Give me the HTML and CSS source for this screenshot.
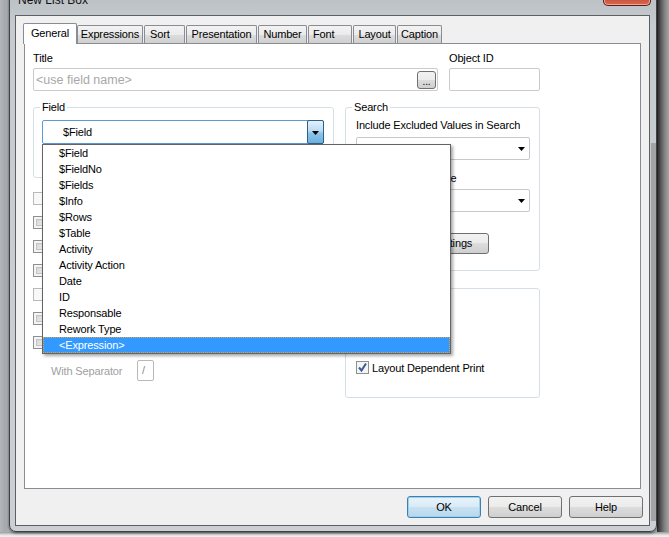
FILE: index.html
```html
<!DOCTYPE html>
<html>
<head>
<meta charset="utf-8">
<link rel="stylesheet" href="styles.css">
</head>
<body>
<div class="desktop">
  <div class="shade-right"></div>
  <div class="shade-bottom"></div>
  <div class="window">
    <div class="frame-bar"></div>
    <div class="titlebar">
      <span class="title">New List Box</span>
      <span class="close"></span>
    </div>
    <div class="client">
      <div class="tabs">
        <div class="tab active t-general">General</div>
        <div class="tab t-expr">Expressions</div>
        <div class="tab t-sort">Sort</div>
        <div class="tab t-pres">Presentation</div>
        <div class="tab t-num">Number</div>
        <div class="tab t-font">Font</div>
        <div class="tab t-layout">Layout</div>
        <div class="tab t-caption">Caption</div>
      </div>
      <div class="panel">
        <div class="row-top">
          <div class="col-title">
            <div class="label">Title</div>
            <div class="input title-input">
              <span class="placeholder">&lt;use field name&gt;</span>
              <span class="dots">...</span>
            </div>
          </div>
          <div class="col-id">
            <div class="label">Object ID</div>
            <div class="input id-input"></div>
          </div>
        </div>
        <div class="row-main">
          <div class="col-left">
            <fieldset class="group field-group">
              <legend class="lg-field">Field</legend>
              <div class="combo focus">
                <span class="combo-text">$Field</span>
                <span class="dropbtn"><svg width="7" height="4" viewBox="0 0 7 4"><polygon points="0,0 7,0 3.5,4" fill="#000"/></svg></span>
              </div>
            </fieldset>
            <div class="checks">
              <div class="check"><span class="box light"></span></div>
              <div class="check"><span class="box"></span></div>
              <div class="check"><span class="box"></span></div>
              <div class="check"><span class="box"></span></div>
              <div class="check"><span class="box light"></span></div>
              <div class="check"><span class="box"></span></div>
              <div class="check"><span class="box"></span></div>
            </div>
            <div class="sep-row">
              <span class="sep-label">With Separator</span>
              <span class="sep-input">/</span>
            </div>
          </div>
          <div class="col-right">
            <fieldset class="group search-group">
              <legend class="lg-search">Search</legend>
              <div class="label s-label1">Include Excluded Values in Search</div>
              <div class="combo plain">
                <span class="combo-text">&lt;use default&gt;</span>
                <span class="arrow"><svg width="7" height="4" viewBox="0 0 7 4"><polygon points="0,0 7,0 3.5,4" fill="#000"/></svg></span>
              </div>
              <div class="label s-label2">Default Search Mode</div>
              <div class="combo plain">
                <span class="combo-text"></span>
                <span class="arrow"><svg width="7" height="4" viewBox="0 0 7 4"><polygon points="0,0 7,0 3.5,4" fill="#000"/></svg></span>
              </div>
              <div class="btn small-btn">Search Settings</div>
            </fieldset>
            <fieldset class="group print-group">
              <div class="check checked-row"><span class="box checked"><svg width="11" height="11" viewBox="0 0 11 11"><path d="M2 5.5 L4.5 8.5 L9 1.5" fill="none" stroke="#3c5a9a" stroke-width="2"/></svg></span><span>Layout Dependent Print</span></div>
            </fieldset>
          </div>
        </div>
        <div class="dropdown">
          <div class="item">$Field</div>
          <div class="item">$FieldNo</div>
          <div class="item">$Fields</div>
          <div class="item">$Info</div>
          <div class="item">$Rows</div>
          <div class="item">$Table</div>
          <div class="item">Activity</div>
          <div class="item">Activity Action</div>
          <div class="item">Date</div>
          <div class="item">ID</div>
          <div class="item">Responsable</div>
          <div class="item">Rework Type</div>
          <div class="item selected">&lt;Expression&gt;</div>
        </div>
      </div>
      <div class="buttons">
        <div class="btn default">OK</div>
        <div class="btn">Cancel</div>
        <div class="btn">Help</div>
      </div>
    </div>
  </div>
</div>
</body>
</html>
```

FILE: styles.css
```css
* { box-sizing: border-box; }
html, body { margin: 0; padding: 0; }
body {
  width: 669px; height: 537px; overflow: hidden;
  font-family: "Liberation Sans", Arial, sans-serif;
  font-size: 11px; color: #000;
  letter-spacing: -0.15px;
  background: #acb0b4;
}
.desktop {
  position: relative; width: 669px; height: 537px; overflow: hidden;
  background: linear-gradient(to right, #b3b7bb, #a5a9ad 5px, #b0b4b8 9px);
}
.shade-right {
  position: absolute; left: 657px; top: 0; width: 12px; bottom: 0;
  background: linear-gradient(to right, #2a2a2a, #4c4c4c 25%, #7e7e7e 60%, #a4a4a4);
}
.shade-bottom {
  position: absolute; left: 0; right: 0; top: 532px; bottom: 0;
  background: linear-gradient(#9a9a9a, #e4e4e4 3px, #f2f2f2);
}
.window {
  position: absolute; left: 9px; top: -16px; width: 648px; height: 548px;
  border: 1px solid #3f4245; border-radius: 7px;
  background: linear-gradient(#b7bcc1, #c6cbcf 40px, #ccd0d4);
  padding: 0 6px 5px 5px;
  display: flex; flex-direction: column;
  box-shadow: 0 1px 3px rgba(0,0,0,0.6);
}
.frame-bar {
  position: absolute; left: 641px; top: 158px; width: 5px; bottom: 10px;
  background: #a3a3a3;
}
.titlebar {
  height: 30px; flex: 0 0 30px;
  display: flex; align-items: flex-start;
}
.title {
  margin-top: 8px; margin-left: 3px;
  font-size: 12px; line-height: 15px; color: #111; letter-spacing: 0;
}
.close {
  margin-left: auto; margin-top: 1px; margin-right: -1px;
  width: 48px; height: 20px;
  border: 1px solid #5a1c17; border-top: none;
  border-radius: 0 0 5px 5px;
  background: linear-gradient(#d87a6a, #c4503c 60%, #d9664c);
  box-shadow: inset 0 0 0 1px #e9a89a;
}
.client {
  flex: 1 1 auto;
  border: 1px solid #5c6064;
  background: #f0f0f0;
  padding: 7px 6px 7px 8px;
  display: flex; flex-direction: column;
}
.tabs {
  display: flex; align-items: flex-end;
  height: 20px; flex: 0 0 20px;
  position: relative; z-index: 2;
}
.tab {
  height: 18px; line-height: 17px;
  border: 1px solid #898c95; border-bottom: none;
  border-radius: 2px 2px 0 0;
  background: linear-gradient(#f3f3f3, #ebebeb 50%, #dddddd 50%, #cfcfcf);
  text-align: center;
  margin-right: 1px;
  white-space: nowrap;
}
.tab.active {
  height: 21px; margin-bottom: -1px; margin-left: -1px; margin-right: 0;
  background: #fff; line-height: 19px;
}
.t-general { width: 54px; }
.t-expr { width: 66px; }
.t-sort { width: 41px; text-align: left; padding-left: 5px; }
.t-pres { width: 71px; }
.t-num { width: 49px; }
.t-font { width: 44px; text-align: left; padding-left: 4px; }
.t-layout { width: 43px; }
.t-caption { width: 45px; }
.panel {
  position: relative;
  height: 446px; flex: 0 0 446px;
  margin-right: 2px;
  border: 1px solid #898c95;
  background: #fff;
  padding: 8px 0 0 8px;
}
.label { height: 13px; line-height: 13px; margin-bottom: 3px; white-space: nowrap; }
.row-top { display: flex; gap: 11px; }
.col-title { width: 405px; }
.col-id { width: 91px; }
.input {
  height: 23px; border: 1px solid #c9cbcf; border-radius: 2px;
  background: #fff;
}
.title-input {
  display: flex; align-items: center; justify-content: space-between;
  padding-left: 2px; padding-right: 1px;
}
.placeholder { color: #a8a8a8; font-size: 12.5px; letter-spacing: 0; }
.dots {
  width: 19px; height: 18px;
  border: 1px solid #707070; border-radius: 3px;
  background: linear-gradient(#f2f2f2, #ebebeb 50%, #dddddd 50%, #cfcfcf);
  text-align: center; line-height: 20px; font-size: 10px;
}
.row-main { display: flex; gap: 11px; margin-top: 10px; }
.col-left { width: 301px; }
.col-right { width: 195px; }
.group {
  margin: 0; min-width: 0;
  border: 1px solid #d5dfe5; border-radius: 3px;
}
legend {
  padding: 0 2px; line-height: 13px; height: 13px;
}
.lg-field { margin-left: -2px; }
.lg-search { margin-left: -4px; }
.field-group { padding: 6px 9px 33px 8px; }
.combo {
  display: flex; align-items: center;
  background: #fff;
}
.combo.focus {
  height: 24px; border: 1px solid #5b9ad6; border-radius: 2px;
  padding-left: 20px;
}
.combo-text { flex: 1 1 auto; white-space: nowrap; overflow: hidden; }
.dropbtn {
  width: 17px; height: 24px; margin: -1px -1px -1px 0;
  border: 1px solid #2c628b; border-radius: 2px;
  background: linear-gradient(#e3f1fb, #bcdcf3 45%, #8cc4ea 55%, #6eb0de);
  display: flex; align-items: center; justify-content: center;
  padding-top: 1px;
}
.checks { margin-top: 14px; }
.check { display: flex; align-items: center; height: 13px; margin-bottom: 11px; white-space: nowrap; }
.box {
  width: 13px; height: 13px; flex: 0 0 13px;
  border: 1px solid #8e8f8f; margin-right: 6px;
  box-shadow: inset 0 0 0 2px #f4f4f4, inset 0 0 0 3px #c4c4c4;
  background: linear-gradient(135deg, #cbcbcb, #f4f4f4);
}
.box.light {
  border-color: #b9b9b9; background: #f8f8f8; box-shadow: none;
}
.sep-row { display: flex; align-items: center; height: 21px; margin-top: 1px; }
.sep-label { width: 104px; padding-left: 18px; color: #a0a0a0; white-space: nowrap; }
.sep-input {
  width: 17px; height: 21px; border: 1px solid #b8b8b8; border-radius: 2px;
  color: #8a8a8a; line-height: 19px; padding-left: 4px;
}
.search-group { padding: 5px 10px 16px 10px; }
.s-label1 { margin-bottom: 5px; }
.s-label2 { margin-top: 12px; margin-bottom: 4px; }
.combo.plain {
  height: 23px; width: 174px;
  border: 1px solid #c8c8c8; border-radius: 2px;
  padding-left: 4px;
}
.arrow { width: 16px; display: flex; justify-content: center; padding-top: 1px; }
.print-group { margin-top: 17px; padding: 72px 10px 23px 10px; }
.checked-row { margin-bottom: 0; }
.checked-row .box { margin-right: 3px; display: flex; align-items: center; justify-content: center; }
.box.checked { background: #f4f4f4; box-shadow: none; border-color: #8e8f8f; }
.dropdown {
  position: absolute; left: 17px; top: 100px; width: 409px; height: 210px;
  border: 1px solid #646464; background: #fff;
  box-shadow: 2px 2px 3px rgba(0,0,0,0.35);
  z-index: 5;
}
.item { height: 16px; line-height: 16px; padding-left: 16px; white-space: nowrap; }
.item.selected {
  background: #3399ff; color: #fff;
  outline: 1px dotted #e0a040; outline-offset: -1px;
}
.buttons { display: flex; justify-content: flex-end; gap: 7px; margin-top: 7px; }
.btn {
  width: 74px; height: 22px;
  border: 1px solid #707070; border-radius: 3px;
  background: linear-gradient(#f2f2f2, #ebebeb 50%, #dddddd 50%, #cfcfcf);
  text-align: center; line-height: 20px; white-space: nowrap;
}
.btn.small-btn { margin-top: 21px; margin-left: 24px; width: 109px; height: 21px; line-height: 19px; }
.btn.default {
  border-color: #3c7fb1;
  background: linear-gradient(#e8f3fa, #d9ebf6 50%, #c7e1f1 50%, #b9d8ec);
  box-shadow: inset 0 0 0 1px #9fd0ee;
}
```
